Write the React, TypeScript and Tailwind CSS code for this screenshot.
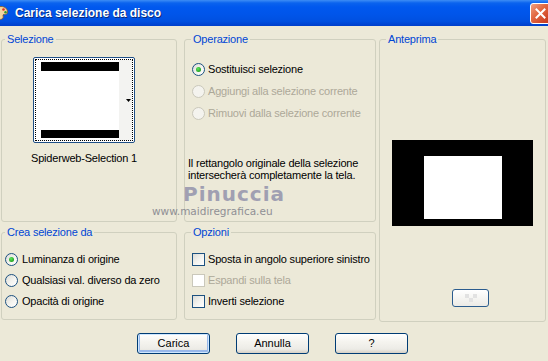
import type { ReactNode } from 'react';

function Radio({ checked = false, disabled = false }: { checked?: boolean; disabled?: boolean }) {
  return (
    <span
      className={`relative w-[13px] h-[13px] rounded-full border flex items-center justify-center shrink-0 ${
        disabled
          ? 'border-[#CAC8BB] bg-[#F4F3EE]'
          : 'border-[#1C5180] bg-[linear-gradient(135deg,#DCDCD7_0%,#F4F4F0_55%,#FFFFFF_100%)]'
      }`}
    >
      {checked && (
        <span className="w-[5px] h-[5px] rounded-full bg-[radial-gradient(circle_at_40%_35%,#5EE85E_0%,#21A121_70%,#1A8A1A_100%)]" />
      )}
    </span>
  );
}

function Check({ disabled = false }: { disabled?: boolean }) {
  return (
    <span
      className={`w-[13px] h-[13px] border shrink-0 ${
        disabled
          ? 'border-[#CAC8BB] bg-[#FFFFFF]'
          : 'border-[#1C5180] bg-[linear-gradient(135deg,#DCDCD7_0%,#F4F4F0_55%,#FFFFFF_100%)]'
      }`}
    />
  );
}

function Group({
  label,
  className = '',
  pad = 'pl-[4px]',
  children,
}: {
  label: string;
  className?: string;
  pad?: string;
  children: ReactNode;
}) {
  return (
    <fieldset className={`border border-[#D0D0BF] rounded-[3px] ${pad} pr-0 pb-0 ${className}`}>
      <legend className="px-[2px] text-[#0046D5] leading-[13px]">{label}</legend>
      {children}
    </fieldset>
  );
}

function XpButton({ children, isDefault = false }: { children: ReactNode; isDefault?: boolean }) {
  return (
    <button
      className={`w-[73px] h-[21px] rounded-[3px] border border-[#003C74] bg-[linear-gradient(to_bottom,#FFFFFF_0%,#F5F4EF_40%,#ECEBE6_80%,#D6D0C5_100%)] text-black leading-none ${
        isDefault ? 'shadow-[inset_0_0_0_1px_#CEE7FF,inset_0_-1px_0_2px_#98B8EA]' : ''
      }`}
    >
      {children}
    </button>
  );
}

export default function App() {
  return (
    <div className="w-[548px] h-[361px] overflow-hidden relative bg-[#ECE9D8] text-[11px] tracking-[-0.2px] text-black font-['Liberation_Sans',Arial,sans-serif]">
      {/* title bar */}
      <div className="h-[26px] flex items-center justify-between tracking-normal bg-[linear-gradient(to_bottom,#3D8DF5_0px,#0A63EE_3px,#0058EE_7px,#0055EA_55%,#0050E0_82%,#003FCB_100%)]">
        <div className="flex items-center">
          <svg width="16" height="16" viewBox="0 0 16 16" className="-ml-[7px]">
            <path d="M8 1.5c4 0 6.5 2.4 6.5 5.5 0 2-1.6 2.6-3 2.4-1.2-.2-1.8.6-1.4 1.6.5 1.3-.3 3.4-2.6 3.4C4 14.4 1.5 11.5 1.5 8S4 1.5 8 1.5z" fill="#F2D6A2" stroke="#8A5A20" strokeWidth="0.8" />
            <circle cx="10.5" cy="4.5" r="1.3" fill="#E0301E" />
            <circle cx="12.5" cy="7.2" r="1.2" fill="#2E9A2E" />
            <circle cx="5" cy="5" r="1.2" fill="#2A5ADB" />
          </svg>
          <span className="ml-[6px] font-bold text-[12px] text-white [text-shadow:1px_1px_0_#0A2A7A]">
            Carica selezione da disco
          </span>
        </div>
        <div className="-mr-[3px] w-[21px] h-[21px] rounded-[3px] border border-white bg-[linear-gradient(135deg,#F0A080_0%,#E26A43_40%,#D2482A_75%,#C03A1E_100%)] flex items-center justify-center">
          <svg width="11" height="11" viewBox="0 0 11 11">
            <path d="M1.5 1.5l8 8M9.5 1.5l-8 8" stroke="white" strokeWidth="2" strokeLinecap="square" />
          </svg>
        </div>
      </div>

      {/* groups */}
      <div className="flex mt-[7px] pl-[1px]">
        <div className="w-[176px] flex flex-col gap-[4px]">
          <Group label="Selezione" pad="pl-[3px]" className="h-[189px]">
            <div className="ml-[28px] mt-[11px] w-[102px] flex flex-col items-center">
              <div className="w-[102px] h-[86px] rounded-[2px] border border-[#1F4F86] bg-white p-[1px]">
                <div className="w-full h-full border border-dotted border-black flex">
                  <div className="w-[83px] h-full bg-white flex flex-col justify-between pl-[5px] py-[2px]">
                    <div className="h-[9px] bg-black" />
                    <div className="h-[8px] bg-black" />
                  </div>
                  <div className="flex-1 bg-[#F3F3F1] flex items-center justify-end pr-[1px]">
                    <svg width="5" height="3" viewBox="0 0 5 3">
                      <path d="M0 0h5L2.5 3z" fill="#000" />
                    </svg>
                  </div>
                </div>
              </div>
              <div className="mt-[9px] leading-[13px] whitespace-nowrap">Spiderweb-Selection 1</div>
            </div>
          </Group>
          <Group label="Crea selezione da" pad="pl-[3px]" className="h-[94px]">
            <div className="mt-[10px] flex flex-col">
              <div className="h-[21px] flex items-center gap-[4px]">
                <Radio checked />
                <span>Luminanza di origine</span>
              </div>
              <div className="h-[21px] flex items-center gap-[4px]">
                <Radio />
                <span>Qualsiasi val. diverso da zero</span>
              </div>
              <div className="h-[20px] flex items-center gap-[4px]">
                <Radio />
                <span>Opacità di origine</span>
              </div>
            </div>
          </Group>
        </div>

        <div className="w-[192px] ml-[7px] flex flex-col gap-[4px]">
          <Group label="Operazione" pad="pl-[6px]" className="h-[189px]">
            <div className="mt-[12px] ml-[1px] flex flex-col">
              <div className="h-[22px] flex items-center gap-[3px]">
                <Radio checked />
                <span>Sostituisci selezione</span>
              </div>
              <div className="h-[22px] flex items-center gap-[3px] text-[#ACA899]">
                <Radio disabled />
                <span>Aggiungi alla selezione corrente</span>
              </div>
              <div className="h-[22px] flex items-center gap-[3px] text-[#ACA899]">
                <Radio disabled />
                <span>Rimuovi dalla selezione corrente</span>
              </div>
            </div>
            <p className="mt-[33px] -ml-[3px] leading-[12px]">
              Il rettangolo originale della selezione
              <br />
              intersecherà completamente la tela.
            </p>
          </Group>
          <Group label="Opzioni" pad="pl-[6px]" className="h-[94px]">
            <div className="mt-[10px] ml-[1px] flex flex-col">
              <div className="h-[21px] flex items-center gap-[3px] whitespace-nowrap">
                <Check />
                <span>Sposta in angolo superiore sinistro</span>
              </div>
              <div className="h-[21px] flex items-center gap-[3px] text-[#ACA899]">
                <Check disabled />
                <span>Espandi sulla tela</span>
              </div>
              <div className="h-[20px] flex items-center gap-[3px]">
                <Check />
                <span>Inverti selezione</span>
              </div>
            </div>
          </Group>
        </div>

        <Group label="Anteprima" pad="pl-[6px]" className="w-[167px] ml-[3px] h-[289px]">
          <div className="ml-[6px] mt-[94px] w-[141px] h-[86px] bg-black pt-[16px] pl-[32px]">
            <div className="w-[78px] h-[63px] bg-white" />
          </div>
          <div className="ml-[66px] mt-[63px] w-[37px] h-[18px] rounded-[3px] border border-[#2B5C8E] bg-[linear-gradient(to_bottom,#FFFFFF,#ECEBE6)] flex items-center justify-center">
            <svg width="18" height="10" viewBox="0 0 18 10">
              <rect x="3" y="1" width="4" height="4" fill="#E2E2E2" />
              <rect x="11" y="1" width="4" height="4" fill="#E2E2E2" />
              <rect x="7" y="5" width="4" height="4" fill="#E2E2E2" />
            </svg>
          </div>
        </Group>
      </div>

      {/* buttons */}
      <div className="mt-[11px] pl-[137px] flex gap-[26px] tracking-normal">
        <XpButton isDefault>Carica</XpButton>
        <XpButton>Annulla</XpButton>
        <XpButton>?</XpButton>
      </div>

      {/* watermark */}
      <div className="absolute left-[183px] top-[183px] pointer-events-none tracking-[1px] font-['DejaVu_Sans',Verdana,sans-serif] text-[20px] leading-[22px] font-semibold text-[#9898AE] opacity-90">
        Pinuccia
      </div>
      <div className="absolute left-[152px] top-[205px] pointer-events-none tracking-normal font-['DejaVu_Sans',Verdana,sans-serif] text-[10.5px] leading-[12px] text-[#86868E] opacity-90 whitespace-nowrap">
        www.maidiregrafica.eu
      </div>
    </div>
  );
}
